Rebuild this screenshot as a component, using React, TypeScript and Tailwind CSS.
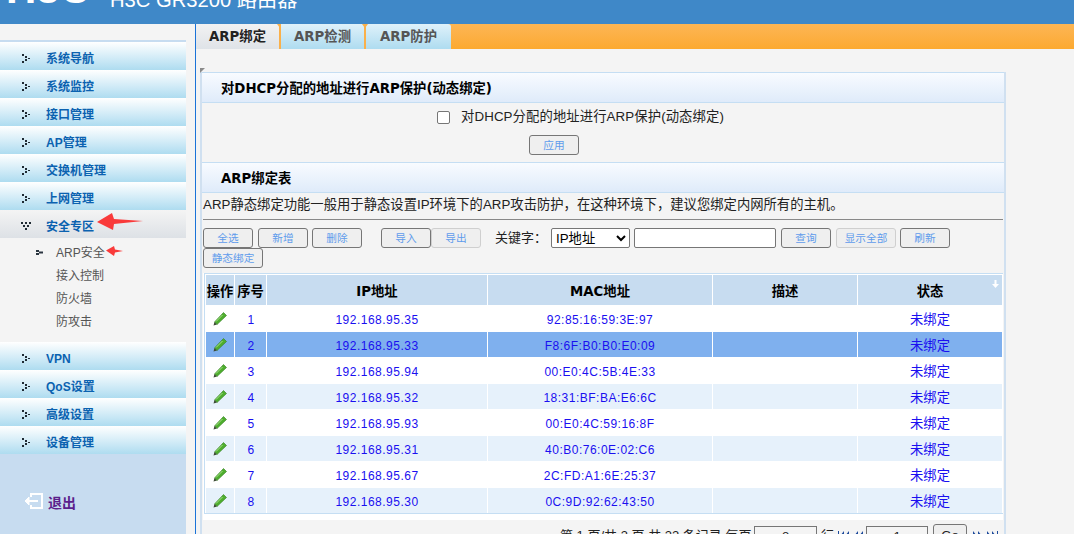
import type React from "react";

const topMenu = ["系统导航", "系统监控", "接口管理", "AP管理", "交换机管理", "上网管理"];
const subMenu = ["接入控制", "防火墙", "防攻击"];
const bottomMenu = ["VPN", "QoS设置", "高级设置", "设备管理"];

const rows = [
  ["1", "192.168.95.35", "92:85:16:59:3E:97"],
  ["2", "192.168.95.33", "F8:6F:B0:B0:E0:09"],
  ["3", "192.168.95.94", "00:E0:4C:5B:4E:33"],
  ["4", "192.168.95.32", "18:31:BF:BA:E6:6C"],
  ["5", "192.168.95.93", "00:E0:4C:59:16:8F"],
  ["6", "192.168.95.31", "40:B0:76:0E:02:C6"],
  ["7", "192.168.95.67", "2C:FD:A1:6E:25:37"],
  ["8", "192.168.95.30", "0C:9D:92:62:43:50"],
];

function Dots() {
  return (
    <svg width="9" height="9" viewBox="0 0 9 9" className="shrink-0">
      <path d="M1 0h2v2H1zM4 2h2v2H4zM7 4h2v1H7zM4 5h2v2H4zM1 7h2v2H1z" fill="#1f2a33" />
    </svg>
  );
}

function MenuRow({ label }: { label: string }) {
  return (
    <div className="h-7 shrink-0 flex items-center pl-[21px] pt-[4px] bg-gradient-to-b from-white to-[#aedcf0]">
      <Dots />
      <span className="ml-[16px] mt-[1px] text-[12px] font-bold text-[#0b62b0]">{label}</span>
    </div>
  );
}

function Btn({ label, muted, className = "" }: { label: string; muted?: boolean; className?: string }) {
  return (
    <button
      className={`h-5 shrink-0 border rounded-[3px] bg-[#efefef] text-[10.67px] leading-none text-[#5f9cec] ${
        muted ? "border-[#cfcfcf]" : "border-[#767676]"
      } ${className}`}
    >
      {label}
    </button>
  );
}

function SectionTitle({ children }: { children: React.ReactNode }) {
  return (
    <div className="h-[31px] shrink-0 flex items-center pl-[19px] pt-[2px] border-y border-[#c5def3] bg-gradient-to-b from-[#f8fbff] to-[#dfebfa] font-['DejaVu_Sans','Noto_Sans_CJK_SC',sans-serif] text-[13.33px] font-bold text-black">
      {children}
    </div>
  );
}

function EditIcon() {
  return (
    <svg width="14" height="14" viewBox="0 0 14 14" className="mx-auto">
      <path d="M10.500 0.500 13.500 3.500 4 12.500 1.500 10Z" fill="#4fae2e" stroke="#2f7d1e" strokeWidth="0.6" />
      <path d="M9.500 3 3 9.500" stroke="#a8e08a" strokeWidth="1" />
      <path d="M1.500 10 4 12.500 0.500 13.500Z" fill="#3d4a35" />
    </svg>
  );
}

function Notch() {
  return (
    <svg width="6" height="4" viewBox="0 0 6 4" className="absolute -right-[4px] top-0">
      <path d="M0 0h6L3 4Z" fill="#fab04a" />
    </svg>
  );
}

function PageArrows({ dir }: { dir: "left" | "right" }) {
  return (
    <svg width="28" height="10" viewBox="0 0 28 10" className="shrink-0">
      {dir === "left" ? (
        <path d="M0 0h1v10H0zM6 0v10L2 5ZM11 0v10L7 5ZM20 0v10l-4-5ZM25 0v10l-4-5Z" fill="#1c4a9c" />
      ) : (
        <path d="M1 0v10l4-5ZM6 0v10l4-5ZM15 0v10l4-5ZM20 0v10l4-5ZM25 0h1v10h-1z" fill="#1c4a9c" />
      )}
    </svg>
  );
}

export default function App() {
  return (
    <div className="w-[1074px] h-[534px] overflow-hidden flex flex-col bg-[#f4f4f4] font-['Liberation_Sans','Noto_Sans_CJK_SC',sans-serif]">
      {/* header, the page is scrolled so only its lower edge shows */}
      <header className="h-6 shrink-0 bg-[#3f88c8] overflow-hidden flex items-start text-white pl-[6px]">
        <span className="w-[104px] shrink-0 text-[42px] leading-[42px] font-bold -mt-[32px]">H3C</span>
        <span className="text-[20.2px] leading-[24px] -mt-[12px]">H3C GR3200 路由器</span>
      </header>

      <div className="flex-1 flex min-h-0">
        {/* sidebar */}
        <aside className="w-[195px] shrink-0">
          <div className="w-[186px] h-full flex flex-col pt-[16px]">
            <div className="h-[2px] shrink-0 bg-[#c7dcf0]" />
            {topMenu.map((m) => (
              <MenuRow key={m} label={m} />
            ))}
            <div className="h-7 shrink-0 flex items-center pl-[21px] pt-[4px] bg-gradient-to-b from-[#f4f4f4] to-[#dde1e6] relative">
              <svg width="10" height="8" viewBox="0 0 10 8" className="shrink-0">
                <path d="M0 0h2v2H0zM4 0h2v2H4zM8 0h2v2H8zM2 3h2v2H2zM6 3h2v2H6zM4 6h2v2H4z" fill="#1f2a33" />
              </svg>
              <span className="ml-[15px] mt-[1px] text-[12px] font-bold text-[#0b62b0]">安全专区</span>
              <svg width="46" height="17" viewBox="0 0 46 17" className="absolute left-[97px] top-[3px]">
                <path d="M0 9 15 0 17 6 46 8 17 11 16 17Z" fill="#f93a3a" />
              </svg>
            </div>
            <div className="h-[104px] shrink-0 pt-[3px] text-[12px] text-[#555]">
              <div className="h-[23px] flex items-center pl-[36px] relative">
                <svg width="7" height="5" viewBox="0 0 7 5" className="shrink-0">
                  <path d="M0 0h3v2H0zM3 1.500h4v2H3zM0 3h3v2H0z" fill="#2a3540" />
                </svg>
                <span className="ml-[13px]">ARP安全</span>
                <svg width="17" height="10" viewBox="0 0 17 10" className="absolute left-[106px] top-[5px]">
                  <path d="M0 4.500 8 0 9 3.500 17 5 9 6.500 8 10Z" fill="#f93a3a" />
                </svg>
              </div>
              {subMenu.map((s) => (
                <div key={s} className="h-[23px] flex items-center pl-[56px]">
                  {s}
                </div>
              ))}
            </div>
            {bottomMenu.map((m) => (
              <MenuRow key={m} label={m} />
            ))}
            <div className="flex-1 bg-[#c7dcf0] pl-[24px] pt-[39px]">
              <div className="flex items-start gap-[5px]">
                <svg width="19" height="16" viewBox="0 0 19 16" fill="none" stroke="white" strokeWidth="2">
                  <path d="M7 4V1h11v14H7v-3" />
                  <path d="M14 8H4" />
                  <path d="M5 4 1 8l4 4Z" fill="white" strokeWidth="1" />
                </svg>
                <span className="text-[14px] leading-[20px] font-bold text-[#5b1f8c]">退出</span>
              </div>
            </div>
          </div>
        </aside>

        {/* main */}
        <main className="flex-1 min-w-0 flex flex-col border-l border-[#1a73d8]">
          <nav className="h-[25px] shrink-0 flex bg-gradient-to-b from-[#fdb654] to-[#fca92f] font-['DejaVu_Sans','Noto_Sans_CJK_SC',sans-serif] text-[13.33px] font-bold">
            <div className="relative w-[85px] flex items-center justify-center bg-gradient-to-b from-[#f2f2f2] to-[#dfe3e8] text-[#222] border-r-2 border-[#fab04a]">
              ARP绑定
              <Notch />
            </div>
            <div className="relative w-[85px] flex items-center justify-center bg-gradient-to-b from-[#dff1fa] to-[#aedcf0] text-[#555] border-r-2 border-[#fab04a] rounded-tr-[3px]">
              ARP检测
              <Notch />
            </div>
            <div className="w-[85px] flex items-center justify-center bg-gradient-to-b from-[#dff1fa] to-[#aedcf0] text-[#555] rounded-tr-[3px]">
              ARP防护
            </div>
          </nav>

          <div className="flex-1 min-h-0 flex relative">
            <svg width="5" height="5" viewBox="0 0 5 5" className="absolute left-[4px] top-[19px]">
              <path d="M0 0h5L0 5Z" fill="#8a8a8a" />
            </svg>
            <div className="w-[4px] shrink-0" />
            <section className="w-[806px] mt-[23px] border-x-2 border-[#d0e0f0] flex flex-col overflow-hidden">
              <SectionTitle>对DHCP分配的地址进行ARP保护(动态绑定)</SectionTitle>
              <div className="h-[59px] shrink-0 flex flex-col items-start">
                <label className="flex items-center h-[18px] mt-[5px] pl-[235px] text-[13.33px] tracking-[0.1px] text-[#222]">
                  <input type="checkbox" className="w-[13px] h-[13px] mr-[11px] appearance-none border border-[#767676] rounded-[2px] bg-white" />
                  对DHCP分配的地址进行ARP保护(动态绑定)
                </label>
                <Btn label="应用" className="w-[50px] ml-[327px] mt-[9px]" />
              </div>
              <SectionTitle>ARP绑定表</SectionTitle>
              <p className="h-[26px] shrink-0 text-[13.33px] leading-[20px] text-[#222] pl-[1px] pt-[2px]">
                ARP静态绑定功能一般用于静态设置IP环境下的ARP攻击防护，在这种环境下，建议您绑定内网所有的主机。
              </p>
              <div className="ml-[1px] mr-[1px] shrink-0 border-t border-[#888]" />

              <div className="shrink-0 pl-[1px] pt-[8px]">
                <div className="flex items-center">
                  <Btn label="全选" className="w-[50px]" />
                  <Btn label="新增" className="w-[50px] ml-[5px]" />
                  <Btn label="删除" className="w-[50px] ml-[4px]" />
                  <Btn label="导入" className="w-[50px] ml-[19px]" />
                  <Btn label="导出" muted className="w-[50px]" />
                  <span className="w-[56px] shrink-0 ml-[14px] whitespace-nowrap text-[13px] text-[#222]">关键字：</span>
                  <select className="w-[79px] h-5 shrink-0 border border-[#767676] rounded-[2px] bg-white text-[13.33px] text-black">
                    <option>IP地址</option>
                  </select>
                  <input className="w-[142px] h-5 shrink-0 ml-[4px] border border-[#767676] rounded-[2px] bg-white" />
                  <Btn label="查询" className="w-[50px] ml-[5px]" />
                  <Btn label="显示全部" muted className="w-[60px] ml-[5px]" />
                  <Btn label="刷新" className="w-[50px] ml-[4px]" />
                </div>
                <Btn label="静态绑定" className="w-[60px] block" />
              </div>

              <div className="shrink-0 ml-[1px] w-[800px] mt-[5px] pl-[1px] bg-white">
                <div className="border-y border-l border-[#c5def3]">
                  <table className="w-[798px] table-fixed border-separate border-spacing-[1px] -mb-px text-[12px] tracking-[0.5px] text-[#1a0ff0]">
                    <thead>
                      <tr className="h-[30px] bg-[#c7dcf0] font-['DejaVu_Sans','Noto_Sans_CJK_SC',sans-serif] text-[13.33px] tracking-normal font-bold text-black">
                        <th className="w-[28px] pt-[3px] whitespace-nowrap">操作</th>
                        <th className="w-[31px] pt-[3px] whitespace-nowrap">序号</th>
                        <th className="w-[220px] pt-[3px]">IP地址</th>
                        <th className="w-[224px] pt-[3px]">MAC地址</th>
                        <th className="w-[144px] pt-[3px]">描述</th>
                        <th className="relative pt-[3px]">
                          状态
                          <svg width="7" height="8" viewBox="0 0 7 8" className="absolute right-[3px] top-[5px]">
                            <path d="M2.500 0h2v4H7L3.500 8 0 4h2.500Z" fill="white" />
                          </svg>
                        </th>
                      </tr>
                    </thead>
                    <tbody>
                      {rows.map(([no, ip, mac], i) => (
                        <tr
                          key={no}
                          className={`h-[25px] text-center ${
                            i === 1 ? "bg-[#7fb0ee]" : i % 2 === 1 ? "bg-[#e6f1fb]" : "bg-white"
                          }`}
                        >
                          <td>
                            <EditIcon />
                          </td>
                          <td className="pt-[2px] pl-[1px]">{no}</td>
                          <td className="pt-[2px]">{ip}</td>
                          <td className="pt-[2px]">{mac}</td>
                          <td />
                          <td className="pt-[2px] text-[13.33px] tracking-normal">未绑定</td>
                        </tr>
                      ))}
                    </tbody>
                  </table>
                </div>
                <div className="h-[6px]" />
              </div>

              <div className="shrink-0 flex items-center h-[24px] mt-[4px] pl-[358px] text-[13px] text-[#222]">
                <span className="w-[194px] shrink-0 whitespace-nowrap">第 1 页/共 3 页 共 22 条记录 每页</span>
                <input defaultValue="8" className="w-[63px] h-5 shrink-0 border border-[#767676] text-center" />
                <span className="ml-[4px] w-[17px] shrink-0">行</span>
                <PageArrows dir="left" />
                <input defaultValue="1" className="w-[62px] h-5 shrink-0 border border-[#767676] text-center" />
                <button className="w-[34px] h-6 shrink-0 ml-[5px] border border-[#767676] rounded-[3px] bg-[#efefef]">Go</button>
                <span className="ml-[5px] flex">
                  <PageArrows dir="right" />
                </span>
              </div>
            </section>
          </div>
        </main>
      </div>
    </div>
  );
}
